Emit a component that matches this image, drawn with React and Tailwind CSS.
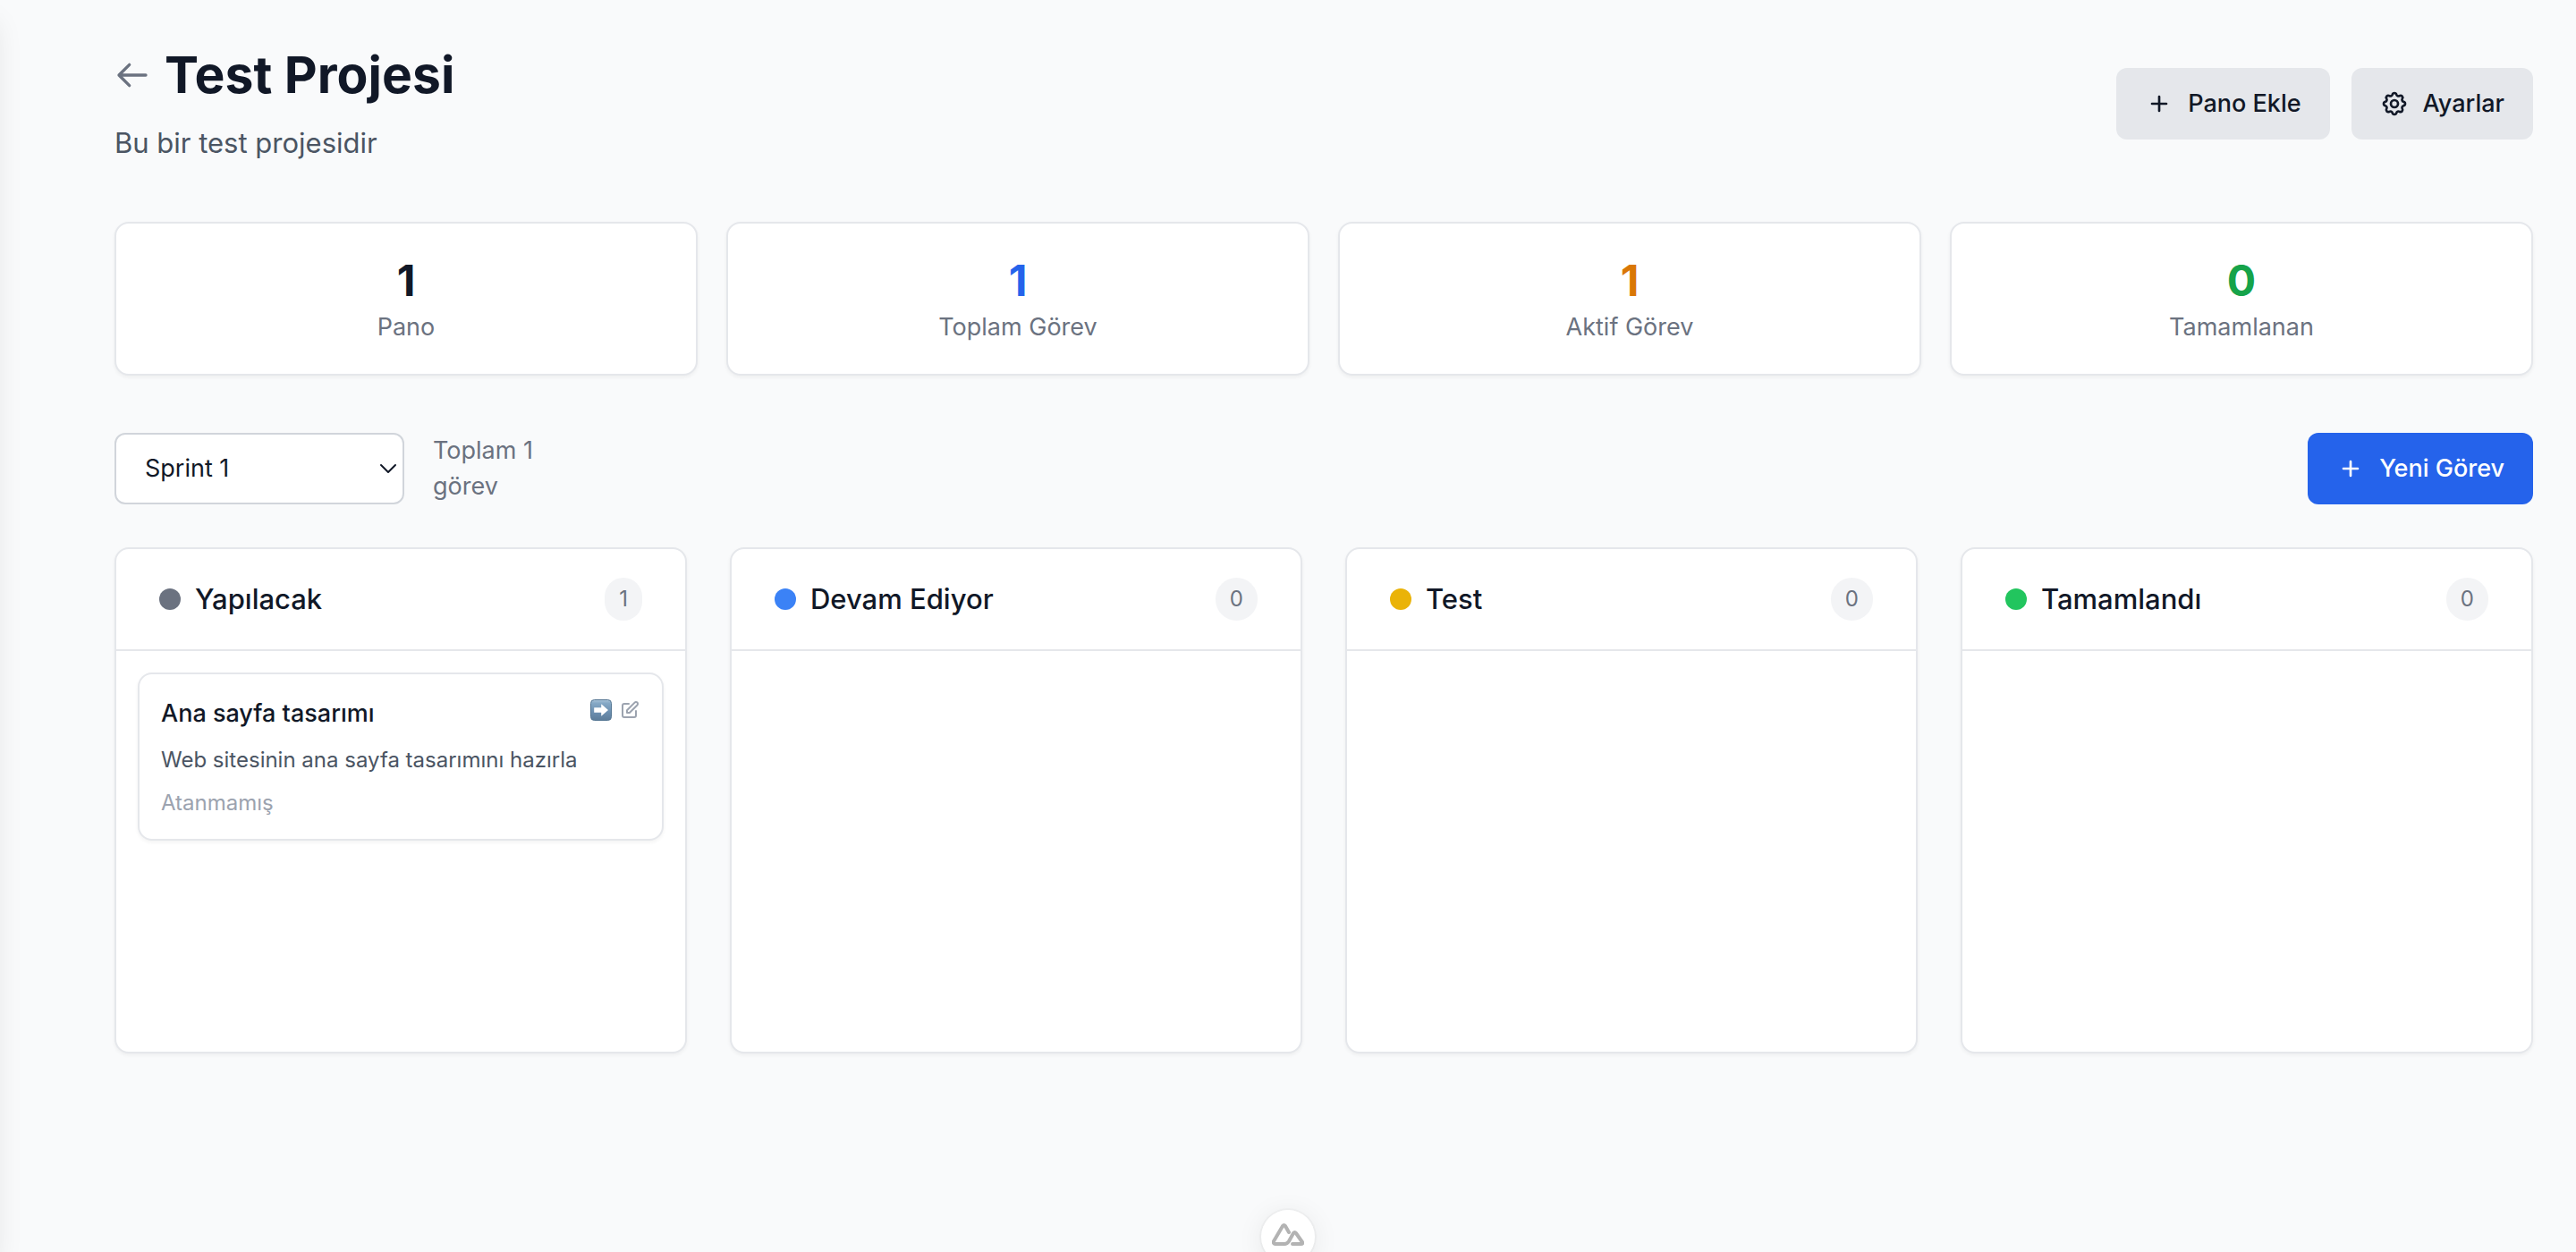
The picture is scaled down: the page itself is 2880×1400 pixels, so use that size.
import { useState } from "react";

const stats = [
  { value: 1, label: "Pano", color: "text-[#111827]" },
  { value: 1, label: "Toplam Görev", color: "text-[#2563eb]" },
  { value: 1, label: "Aktif Görev", color: "text-[#d97706]" },
  { value: 0, label: "Tamamlanan", color: "text-[#16a34a]" },
];

const columns = [
  {
    title: "Yapılacak",
    dot: "bg-[#6b7280]",
    tasks: [
      {
        title: "Ana sayfa tasarımı",
        description: "Web sitesinin ana sayfa tasarımını hazırla",
        assignee: "Atanmamış",
      },
    ],
  },
  { title: "Devam Ediyor", dot: "bg-[#3b82f6]", tasks: [] },
  { title: "Test", dot: "bg-[#eab308]", tasks: [] },
  { title: "Tamamlandı", dot: "bg-[#22c55e]", tasks: [] },
];

function Icon({ className, width = 2, children }) {
  return (
    <svg
      className={className}
      viewBox="0 0 24 24"
      fill="none"
      stroke="currentColor"
      strokeWidth={width}
      strokeLinecap="round"
      strokeLinejoin="round"
      aria-hidden="true"
    >
      {children}
    </svg>
  );
}

function PlusIcon() {
  return (
    <Icon className="size-8">
      <path d="M12 6v12m6-6H6" />
    </Icon>
  );
}

function GearIcon() {
  return (
    <Icon className="size-8">
      <path d="M10.325 4.317c.426-1.756 2.924-1.756 3.35 0a1.724 1.724 0 002.573 1.066c1.543-.94 3.31.826 2.37 2.37a1.724 1.724 0 001.065 2.572c1.756.426 1.756 2.924 0 3.35a1.724 1.724 0 00-1.066 2.573c.94 1.543-.826 3.31-2.37 2.37a1.724 1.724 0 00-2.572 1.065c-.426 1.756-2.924 1.756-3.35 0a1.724 1.724 0 00-2.573-1.066c-1.543.94-3.31-.826-2.37-2.37a1.724 1.724 0 00-1.065-2.572c-1.756-.426-1.756-2.924 0-3.35a1.724 1.724 0 001.066-2.573c-.94-1.543.826-3.31 2.37-2.37.996.608 2.296.07 2.572-1.065z" />
      <path d="M15 12a3 3 0 11-6 0 3 3 0 016 0z" />
    </Icon>
  );
}

function ArrowBadge() {
  return (
    <svg className="size-6" viewBox="0 0 24 24" aria-hidden="true">
      <defs>
        <linearGradient id="badge-fill" x1="0" y1="0" x2="0" y2="1">
          <stop offset="0" stopColor="#a9c3d8" />
          <stop offset="0.16" stopColor="#86a9c6" />
          <stop offset="0.6" stopColor="#6c8fb0" />
          <stop offset="1" stopColor="#5d7c99" />
        </linearGradient>
      </defs>
      <rect x="0.5" y="0.5" width="23" height="23" rx="4" fill="url(#badge-fill)" stroke="#557693" strokeWidth="1" />
      <path d="M4.2 9.2h8V5.300L20 12l-7.800 6.800v-4H4.200z" fill="#fff" />
    </svg>
  );
}

function Button({ primary, icon, children }) {
  const tone = primary ? "bg-[#2563eb] text-white" : "bg-[#e5e7eb] text-[#111827]";
  return (
    <button
      type="button"
      className={`flex items-center gap-4 rounded-xl px-8 py-5 text-[27px] leading-10 font-medium ${tone}`}
    >
      {icon}
      {children}
    </button>
  );
}

function TaskCard({ task }) {
  return (
    <article className="rounded-2xl border-2 border-[#e5e7eb] bg-white p-6 shadow-[0_2px_4px_rgba(0,0,0,0.05)]">
      <div className="mb-4 flex items-start justify-between">
        <h4 className="text-[27px] leading-10 font-medium text-[#111827]">{task.title}</h4>
        <div className="flex h-8 items-center gap-2">
          <button type="button" aria-label="Taşı">
            <ArrowBadge />
          </button>
          <button type="button" aria-label="Düzenle" className="text-[#9ca3af]">
            <Icon className="size-6">
              <path d="M11 5H6a2 2 0 00-2 2v11a2 2 0 002 2h11a2 2 0 002-2v-5m-1.414-9.414a2 2 0 112.828 2.828L11.828 15H9v-2.828l8.586-8.586z" />
            </Icon>
          </button>
        </div>
      </div>
      <p className="mb-4 text-2xl leading-8 text-[#4b5563]">{task.description}</p>
      <p className="text-2xl leading-8 text-[#9ca3af]">{task.assignee}</p>
    </article>
  );
}

function Column({ column }) {
  return (
    <section className="rounded-2xl border-2 border-[#e5e7eb] bg-white shadow-[0_2px_4px_rgba(0,0,0,0.05)]">
      <header className="flex items-center justify-between border-b-2 border-[#e5e7eb] px-12 py-8">
        <div className="flex items-center gap-4">
          <span className={`size-6 rounded-full ${column.dot}`} />
          <h3 className="text-[31px] leading-12 font-medium text-[#111827]">{column.title}</h3>
        </div>
        <span className="rounded-full bg-[#f3f4f6] px-4 py-2 text-2xl leading-8 text-[#6b7280]">
          {column.tasks.length}
        </span>
      </header>
      <div className="min-h-112 p-6">
        {column.tasks.map((task) => (
          <TaskCard key={task.title} task={task} />
        ))}
      </div>
    </section>
  );
}

export default function App() {
  const [board, setBoard] = useState("Sprint 1");

  return (
    <div className="relative min-h-screen overflow-hidden bg-[#f9fafb] pt-12 pr-12 pb-12 pl-32 font-[Inter,sans-serif]">
      <div className="absolute inset-y-0 right-full w-128 bg-white shadow-[0_20px_30px_-6px_rgba(0,0,0,0.1)]" />

      <header className="mb-16 flex items-center justify-between">
        <div>
          <div className="mb-4 flex items-center gap-4">
            <a href="#projeler" aria-label="Geri" className="text-[#6b7280]">
              <Icon className="size-10">
                <path d="M10 19l-7-7m0 0l7-7m-7 7h18" />
              </Icon>
            </a>
            <h1 className="text-[57px] leading-18 font-bold text-[#111827]">Test Projesi</h1>
          </div>
          <p className="text-[31px] leading-12 text-[#4b5563]">Bu bir test projesidir</p>
        </div>
        <div className="flex gap-6">
          <Button icon={<PlusIcon />}>Pano Ekle</Button>
          <Button icon={<GearIcon />}>Ayarlar</Button>
        </div>
      </header>

      <div className="mb-16 grid grid-cols-4 gap-8">
        {stats.map((stat) => (
          <div
            key={stat.label}
            className="rounded-2xl border-2 border-[#e5e7eb] bg-white p-8 text-center shadow-[0_2px_4px_rgba(0,0,0,0.05)]"
          >
            <div className={`text-5xl leading-16 font-bold ${stat.color}`}>{stat.value}</div>
            <div className="text-[27px] leading-10 text-[#6b7280]">{stat.label}</div>
          </div>
        ))}
      </div>

      <div className="mb-12 flex items-center justify-between">
        <div className="flex items-center gap-8">
          <div className="relative">
            <select
              aria-label="Pano"
              value={board}
              onChange={(event) => setBoard(event.target.value)}
              className="block h-20 w-81 appearance-none rounded-xl border-2 border-[#d1d5db] bg-white px-8 text-[27px] leading-10 text-[#111827]"
            >
              <option>Sprint 1</option>
            </select>
            <svg
              className="pointer-events-none absolute top-8 right-2 h-4 w-5"
              viewBox="0 0 20 16"
              fill="none"
              stroke="#111827"
              strokeWidth="2"
              strokeLinecap="round"
              strokeLinejoin="round"
              aria-hidden="true"
            >
              <path d="M2 4l8 8 8-8" />
            </svg>
          </div>
          <p className="w-32 text-[27px] leading-10 text-[#6b7280]">Toplam 1 görev</p>
        </div>
        <Button primary icon={<PlusIcon />}>
          Yeni Görev
        </Button>
      </div>

      <div className="grid grid-cols-4 gap-12">
        {columns.map((column) => (
          <Column key={column.title} column={column} />
        ))}
      </div>

      <button
        type="button"
        aria-label="Nuxt DevTools"
        className="fixed -bottom-[13px] left-1/2 flex size-15 -translate-x-1/2 items-start justify-center rounded-full bg-white pt-3 shadow-[0_0_0_2px_rgba(0,0,0,0.03),0_4px_30px_rgba(0,0,0,0.08)]"
      >
        <svg
          className="h-9 w-9"
          viewBox="0 0 36 36"
          fill="none"
          stroke="#b3b3b3"
          strokeWidth="4"
          strokeLinejoin="round"
          strokeLinecap="round"
          aria-hidden="true"
        >
          <path d="M14 26H4a2 2 0 01-2-3L12 6q1.500-2 3 0l4 7" />
          <path d="M14 26q3 0 5-3l5-9q1.500-2 3 0l7 10q1 2-1.500 2H23" />
        </svg>
      </button>
    </div>
  );
}
